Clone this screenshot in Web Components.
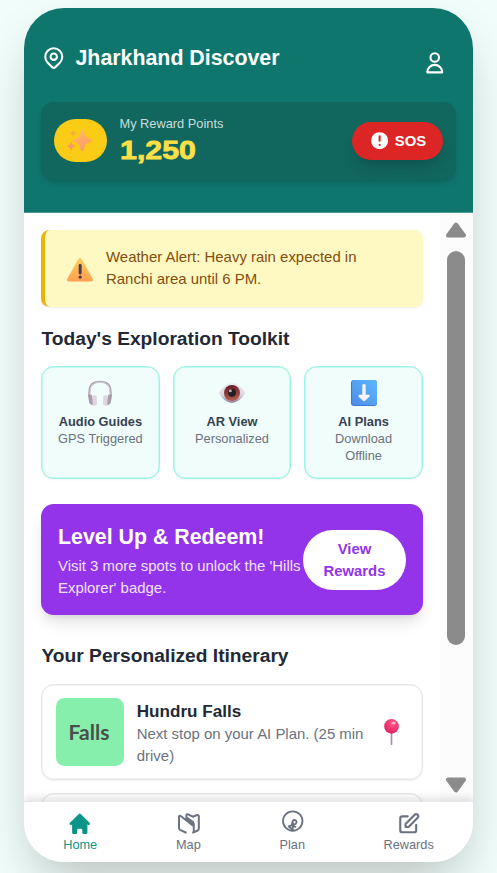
<!DOCTYPE html>
<html lang="en">
<head>
<meta charset="utf-8">
<title>Jharkhand Discover</title>
<style>
html{font-size:17px}
body{margin:0;height:873px;overflow:hidden;background:#f0fdfa;font-family:"Liberation Sans",Arial,sans-serif}
</style>
</head>
<body>
<discover-app></discover-app>
<script>
const define = (name, html) => {
  const t = document.createElement('template');
  t.innerHTML = '<style>*{box-sizing:border-box}:host{display:block;box-sizing:border-box}svg{display:block}</style>' + html;
  customElements.define(name, class extends HTMLElement {
    constructor() {
      super();
      this.attachShadow({mode: 'open'}).append(t.content.cloneNode(true));
    }
  });
};

const ICONS = {
  pin: ['0 0 24 24', '<g fill="none" stroke="currentColor" stroke-width="2" stroke-linecap="round" stroke-linejoin="round"><path d="M17.657 16.657L13.414 20.9a2 2 0 01-2.827 0l-4.244-4.243a8 8 0 1111.314 0z"/><path d="M15 11a3 3 0 11-6 0 3 3 0 016 0z"/></g>'],
  user: ['0 0 24 24', '<path fill="none" stroke="currentColor" stroke-width="2" stroke-linecap="round" stroke-linejoin="round" d="M16 7a4 4 0 11-8 0 4 4 0 018 0zM12 14a7 7 0 00-7 7h14a7 7 0 00-7-7z"/>'],
  alert: ['0 0 20 20', '<path fill="currentColor" fill-rule="evenodd" d="M18 10a8 8 0 11-16 0 8 8 0 0116 0zm-7 4a1 1 0 11-2 0 1 1 0 012 0zm-1-9a1 1 0 00-1 1v4a1 1 0 102 0V6a1 1 0 00-1-1z"/>'],
  home: ['0 0 20 20', '<path fill="currentColor" d="M10.707 2.293a1 1 0 00-1.414 0l-7 7a1 1 0 001.414 1.414L4 10.414V17a1 1 0 001 1h2a1 1 0 001-1v-2a1 1 0 011-1h2a1 1 0 011 1v2a1 1 0 001 1h2a1 1 0 001-1v-6.586l.293.293a1 1 0 001.414-1.414l-7-7z"/>'],
  map: ['0 0 76 76', '<path fill="none" stroke="currentColor" stroke-width="6" stroke-linecap="round" stroke-linejoin="round" d="M29 64L12 56Q9 54 9 51V18Q9 13 14 15L49 42M51 64L53 63V38L31 22V14Q31 8 36 10L50 17L63 12Q68 11 68 16V52Q68 56 65 58L51 64M34 21L51 33M38 29L51 40"/>'],
  plan: ['0 0 76 76', '<g fill="none" stroke="currentColor" stroke-width="5.5" stroke-linecap="round" stroke-linejoin="round"><circle cx="38" cy="30" r="29"/><path d="M38 57V44M26 46l9-4 3-13q5-4 10 0 4 6-3 10l-9 3 3-7M27 47l11 9M38 44l8 3"/></g>'],
  edit: ['0 0 24 24', '<path fill="none" stroke="currentColor" stroke-width="2" stroke-linecap="round" stroke-linejoin="round" d="M11 5H6a2 2 0 00-2 2v11a2 2 0 002 2h11a2 2 0 002-2v-5m-1.414-9.414a2 2 0 112.828 2.828L11.828 15H9v-2.828l8.586-8.586z"/>'],
  sparkles: ['0 0 78 70', '<defs><linearGradient id="g" x2=".4" y2="1"><stop stop-color="#ffc063"/><stop offset="1" stop-color="#ff9a6c"/></linearGradient></defs><g fill="url(#g)"><path d="M46 1Q49 1 51 6C54 23 58 27 74 32Q78 35 74 38C58 43 54 47 51 64Q46 72 41 64C38 47 34 43 20 38Q15 35 20 32C34 27 38 23 42 6Q43 1 46 1Z"/><path d="M18 2C20 9 21 10 29 13C21 16 20 17 18 24C16 17 15 16 7 13C15 10 16 9 18 2Z" fill="#f6a948"/><path d="M12 37C15 48 17 49 28 52C17 56 15 57 12 68C9 57 7 56-3 52C7 49 9 48 12 37Z" fill="#ff9668"/></g>'],
  warning: ['0 0 78 70', '<defs><linearGradient id="w" x2="0" y2="1"><stop stop-color="#ffcf5b"/><stop offset="1" stop-color="#ff9f50"/></linearGradient></defs><path fill="url(#w)" d="M33 4Q39-4 45 4L77 62Q80 70 72 70H6Q-2 70 1 62Z"/><rect x="35" y="18" width="9" height="31" rx="4" fill="#463d54"/><circle cx="39.500" cy="57" r="5" fill="#463d54"/>'],
  headphones: ['0 0 78 78', '<path d="M7 48V36C7 14 20 5 39 5S71 14 71 36V48" fill="none" stroke="#aaa0ae" stroke-width="6"/><path d="M9 44V35C9 15 22 6 39 6S69 15 69 35V44" fill="none" stroke="#d9d3da" stroke-width="3"/><path d="M5 43l9 1 8 32q-11 1-15-7L3 48z" fill="#a79eaa"/><path d="M16 47q9-3 13 2l1 23q-1 5-8 5h-5z" fill="#ded5e2"/><path d="M73 43l-9 1-8 32q11 1 15-7l4-21z" fill="#a79eaa"/><path d="M62 47q-9-3-13 2l-1 23q1 5 8 5h5z" fill="#ded5e2"/>'],
  eye: ['0 0 78 60', '<defs><linearGradient id="e" x2="0" y2="1"><stop stop-color="#eeedf0"/><stop offset=".6" stop-color="#d8d4dc"/><stop offset="1" stop-color="#917ea8"/></linearGradient><linearGradient id="i" x2=".2" y2="1"><stop stop-color="#5e1826"/><stop offset="1" stop-color="#b35c4c"/></linearGradient></defs><path fill="url(#e)" d="M0 30Q15 2 39 0Q64 2 78 30Q63 58 39 60Q14 58 0 30Z"/><circle cx="39" cy="30" r="24" fill="url(#i)"/><circle cx="39" cy="29" r="12" fill="#271b26"/><circle cx="34" cy="23" r="4.500" fill="#c6aeb1"/>'],
  download: ['0 0 78 78', '<defs><linearGradient id="d" x1="1" x2="0" y2="1"><stop stop-color="#5cb8ff"/><stop offset="1" stop-color="#4d8de8"/></linearGradient></defs><rect width="78" height="78" rx="9" fill="#397bd0"/><rect x="3" width="75" height="75" rx="8" fill="url(#d)"/><path fill="#fdf3ff" d="M34 14Q39 10 44 14V44H54Q59 46 55 50L42 62Q39 65 36 62L23 50Q20 46 25 44H34Z"/>'],
  pushpin: ['0 0 44 78', '<defs><radialGradient id="p" cx=".6" cy=".3" r=".75"><stop stop-color="#ff6690"/><stop offset=".45" stop-color="#f73972"/><stop offset="1" stop-color="#d82565"/></radialGradient></defs><path d="M22 40V76" stroke="#a58fb2" stroke-width="5" stroke-linecap="round"/><circle cx="22" cy="22" r="22" fill="url(#p)"/><ellipse cx="28" cy="12" rx="6" ry="4" fill="#ffb3cc"/>'],
  triangle: ['0 0 22 18', '<path fill="#8b8b8b" stroke="#8b8b8b" stroke-width="4" stroke-linejoin="round" d="M11 3.500L19 14.500H3Z"/>']
};
customElements.define('app-icon', class extends HTMLElement {
  constructor() { super(); this.attachShadow({mode: 'open'}); }
  connectedCallback() {
    const [box, art] = ICONS[this.getAttribute('name')];
    this.shadowRoot.innerHTML = `<style>:host{display:block;flex:none;width:1.5rem;height:1.5rem}svg{display:block;width:100%;height:100%;overflow:visible}</style><svg viewBox="${box}" aria-hidden="true">${art}</svg>`;
  }
});

define('reward-bar', `<style>
:host{display:flex;align-items:center;justify-content:space-between;height:78.500px;padding:.75rem;border-radius:.75rem;background:#11665e;box-shadow:0 4px 7px -1px rgba(0,0,0,.12),0 2px 4px -2px rgba(0,0,0,.1)}
.left{display:flex;align-items:center;gap:.75rem}
.coin{width:53px;height:43px;border-radius:22px;background:#facc15;display:grid;place-items:center}
.coin app-icon{width:26px;height:23px}
.label{font-size:12.800px;line-height:1rem;color:#c9dedb}
.value{font-size:26.500px;line-height:2rem;font-weight:700;color:#fde047;-webkit-text-stroke:.8px #fde047;transform:scaleX(1.145);transform-origin:left;margin:1px 0 0;width:67px}
.sos{display:flex;align-items:center;gap:.25rem;height:38.500px;padding:0 1rem;border-radius:20px;background:#dc2626;color:#fff;font-size:.875rem;font-weight:700;box-shadow:0 10px 15px -3px rgba(0,0,0,.12),0 4px 6px -4px rgba(0,0,0,.12)}
.sos app-icon{width:1.25rem;height:1.25rem}
</style>
<div class="left"><div class="coin"><app-icon name="sparkles"></app-icon></div><div><div class="label">My Reward Points</div><div class="value">1,250</div></div></div>
<div class="sos"><app-icon name="alert"></app-icon><span>SOS</span></div>`);

define('app-header', `<style>
:host{height:204.500px;flex:none;padding:33.500px 17px 0;background:#0f766e;color:#fff;border-bottom:1px solid #4c9b94}
.top{display:flex;justify-content:space-between;height:60px}
.brand{display:flex;align-items:center;gap:9px;height:33px}
.brand b{font-size:21.350px;line-height:1.75rem;padding-top:1px}
.user{padding:8.500px}
</style>
<div class="top"><div class="brand"><app-icon name="pin"></app-icon><b>Jharkhand Discover</b></div><div class="user"><app-icon name="user"></app-icon></div></div>
<reward-bar></reward-bar>`);

define('weather-alert', `<style>
:host{display:flex;align-items:center;height:77px;padding:0 1rem 2px 22px;border-left:4.250px solid #eab308;border-radius:.5rem;background:#fef9c3;color:#854d0e;box-shadow:0 1px 2px rgba(0,0,0,.07);font-size:14.950px;line-height:22px}
app-icon{width:26px;height:23.500px;margin-right:13px;translate:0 2px}
</style><app-icon name="warning"></app-icon><div><slot></slot></div>`);

define('tool-card', `<style>
:host{height:112.500px;padding:12px;border:1px solid #99f6e4;border-radius:.75rem;background:#f0fdfa;text-align:center;font-size:12.800px;line-height:17px;color:#6b7280;box-shadow:inset 0 0 0 .5px #99f6e4,0 1px 2px rgba(0,0,0,.05)}
.pic{height:34px;display:grid;place-items:center;padding-bottom:7px}
b{display:block;color:#374151}
</style><div class="pic"><slot name="icon"></slot></div><b><slot name="title"></slot></b><slot></slot>`);

define('reward-banner', `<style>
:host{display:flex;align-items:center;height:111px;padding:1rem;border-radius:.75rem;background:#9333ea;color:#fff;box-shadow:0 10px 16px -3px rgba(0,0,0,.12),0 4px 6px -4px rgba(0,0,0,.12)}
.copy{width:245px;flex:none;padding-top:3px}
b{display:block;font-size:21.350px;line-height:1.75rem;margin-bottom:2px}
p{margin:0;font-size:14.950px;line-height:22px;color:#f1e3ff;white-space:nowrap}
.btn{flex:none;width:103px;height:60px;padding:8px 17px;border-radius:30px;background:#fff;color:#9333ea;font-size:.875rem;line-height:22px;font-weight:700;text-align:center}
</style><div class="copy"><b>Level Up &amp; Redeem!</b><p>Visit 3 more spots to unlock the 'Hills<br>Explorer' badge.</p></div><div class="btn">View Rewards</div>`);

define('stop-card', `<style>
:host{display:flex;align-items:center;height:96.500px;padding:0 13px 0 14px;border:1px solid #e5e7eb;border-radius:.75rem;background:#fff;box-shadow:inset 0 0 0 .5px #e5e7eb,0 1px 2px rgba(0,0,0,.06)}
.thumb{width:68px;height:68px;flex:none;border-radius:.5rem;background:#86efac;color:#4a4f4c;display:grid;place-items:center;padding-right:2px;font:700 21px Lato,sans-serif}
.copy{flex:1;margin-left:12.750px;padding-top:3px;font-size:14.950px;line-height:22px;color:#6b7280}
b{display:block;font-size:17.100px;line-height:23px;color:#1f2937}
app-icon{width:15px;height:26px;margin-right:10.500px}
</style><div class="thumb"><slot name="thumb"></slot></div><div class="copy"><b><slot name="title"></slot></b><slot></slot></div><app-icon name="pushpin"></app-icon>`);

define('scroll-rail', `<style>
:host{width:33px;background:#fcfcfc;display:flex;flex-direction:column;align-items:center;padding:8px 1px 7px 0}
app-icon{width:22px;height:18px}
.thumb{width:18px;height:394px;margin:12px 0 auto;border-radius:9px;background:#8b8b8b}
.down{transform:rotate(180deg)}
</style><app-icon name="triangle"></app-icon><div class="thumb"></div><app-icon class="down" name="triangle"></app-icon>`);

define('nav-item', `<style>
:host{display:flex;flex-direction:column;align-items:center;padding:9px 8.500px 0;color:#6b7280;font-size:.75rem;line-height:17px}
:host([active]){color:#0d9488}
</style><slot name="icon"></slot><slot></slot>`);

define('bottom-nav', `<style>
:host{display:flex;justify-content:space-around;height:61.500px;flex:none;background:#fff;border-top:1px solid #e5e7eb;box-shadow:0 -3px 8px rgba(0,0,0,.12);z-index:1}
</style>
<nav-item active><app-icon slot="icon" name="home"></app-icon>Home</nav-item>
<nav-item><app-icon slot="icon" name="map"></app-icon>Map</nav-item>
<nav-item><app-icon slot="icon" name="plan"></app-icon>Plan</nav-item>
<nav-item><app-icon slot="icon" name="edit"></app-icon>Rewards</nav-item>`);

define('discover-app', `<style>
:host{padding:8px 0 0 24px}
.phone{width:449px;height:854px;display:flex;flex-direction:column;overflow:hidden;border-radius:40px;background:#fff}
.shade{width:449px;border-radius:40px;box-shadow:0 26px 53px -12px rgba(0,0,0,.25)}
.body{flex:1;min-height:0;display:flex}
main{flex:1;height:588px;overflow:hidden;padding:17.500px 17px 0}
h2{margin:17px 0 12.500px;padding-left:.500px;font-size:19.200px;line-height:1.75rem;color:#1f2937}
.tools{display:grid;grid-template-columns:repeat(3,1fr);gap:.75rem;margin-bottom:25.500px}
reward-banner{margin-bottom:26px}
stop-card{margin-bottom:13px}
.phones,.dl{width:26px;height:26px}
.eye{width:26px;height:20px}
</style>
<div class="shade"><div class="phone">
<app-header></app-header>
<div class="body"><main>
<weather-alert>Weather Alert: Heavy rain expected in<br>Ranchi area until 6 PM.</weather-alert>
<h2>Today's Exploration Toolkit</h2>
<div class="tools">
<tool-card><app-icon slot="icon" class="phones" name="headphones"></app-icon><span slot="title">Audio Guides</span>GPS Triggered</tool-card>
<tool-card><app-icon slot="icon" class="eye" name="eye"></app-icon><span slot="title">AR View</span>Personalized</tool-card>
<tool-card><app-icon slot="icon" class="dl" name="download"></app-icon><span slot="title">AI Plans</span>Download Offline</tool-card>
</div>
<reward-banner></reward-banner>
<h2>Your Personalized Itinerary</h2>
<stop-card><span slot="thumb">Falls</span><span slot="title">Hundru Falls</span>Next stop on your AI Plan. (25 min<br>drive)</stop-card>
<stop-card></stop-card>
</main><scroll-rail></scroll-rail></div>
<bottom-nav></bottom-nav>
</div></div>`);
</script>
</body>
</html>
